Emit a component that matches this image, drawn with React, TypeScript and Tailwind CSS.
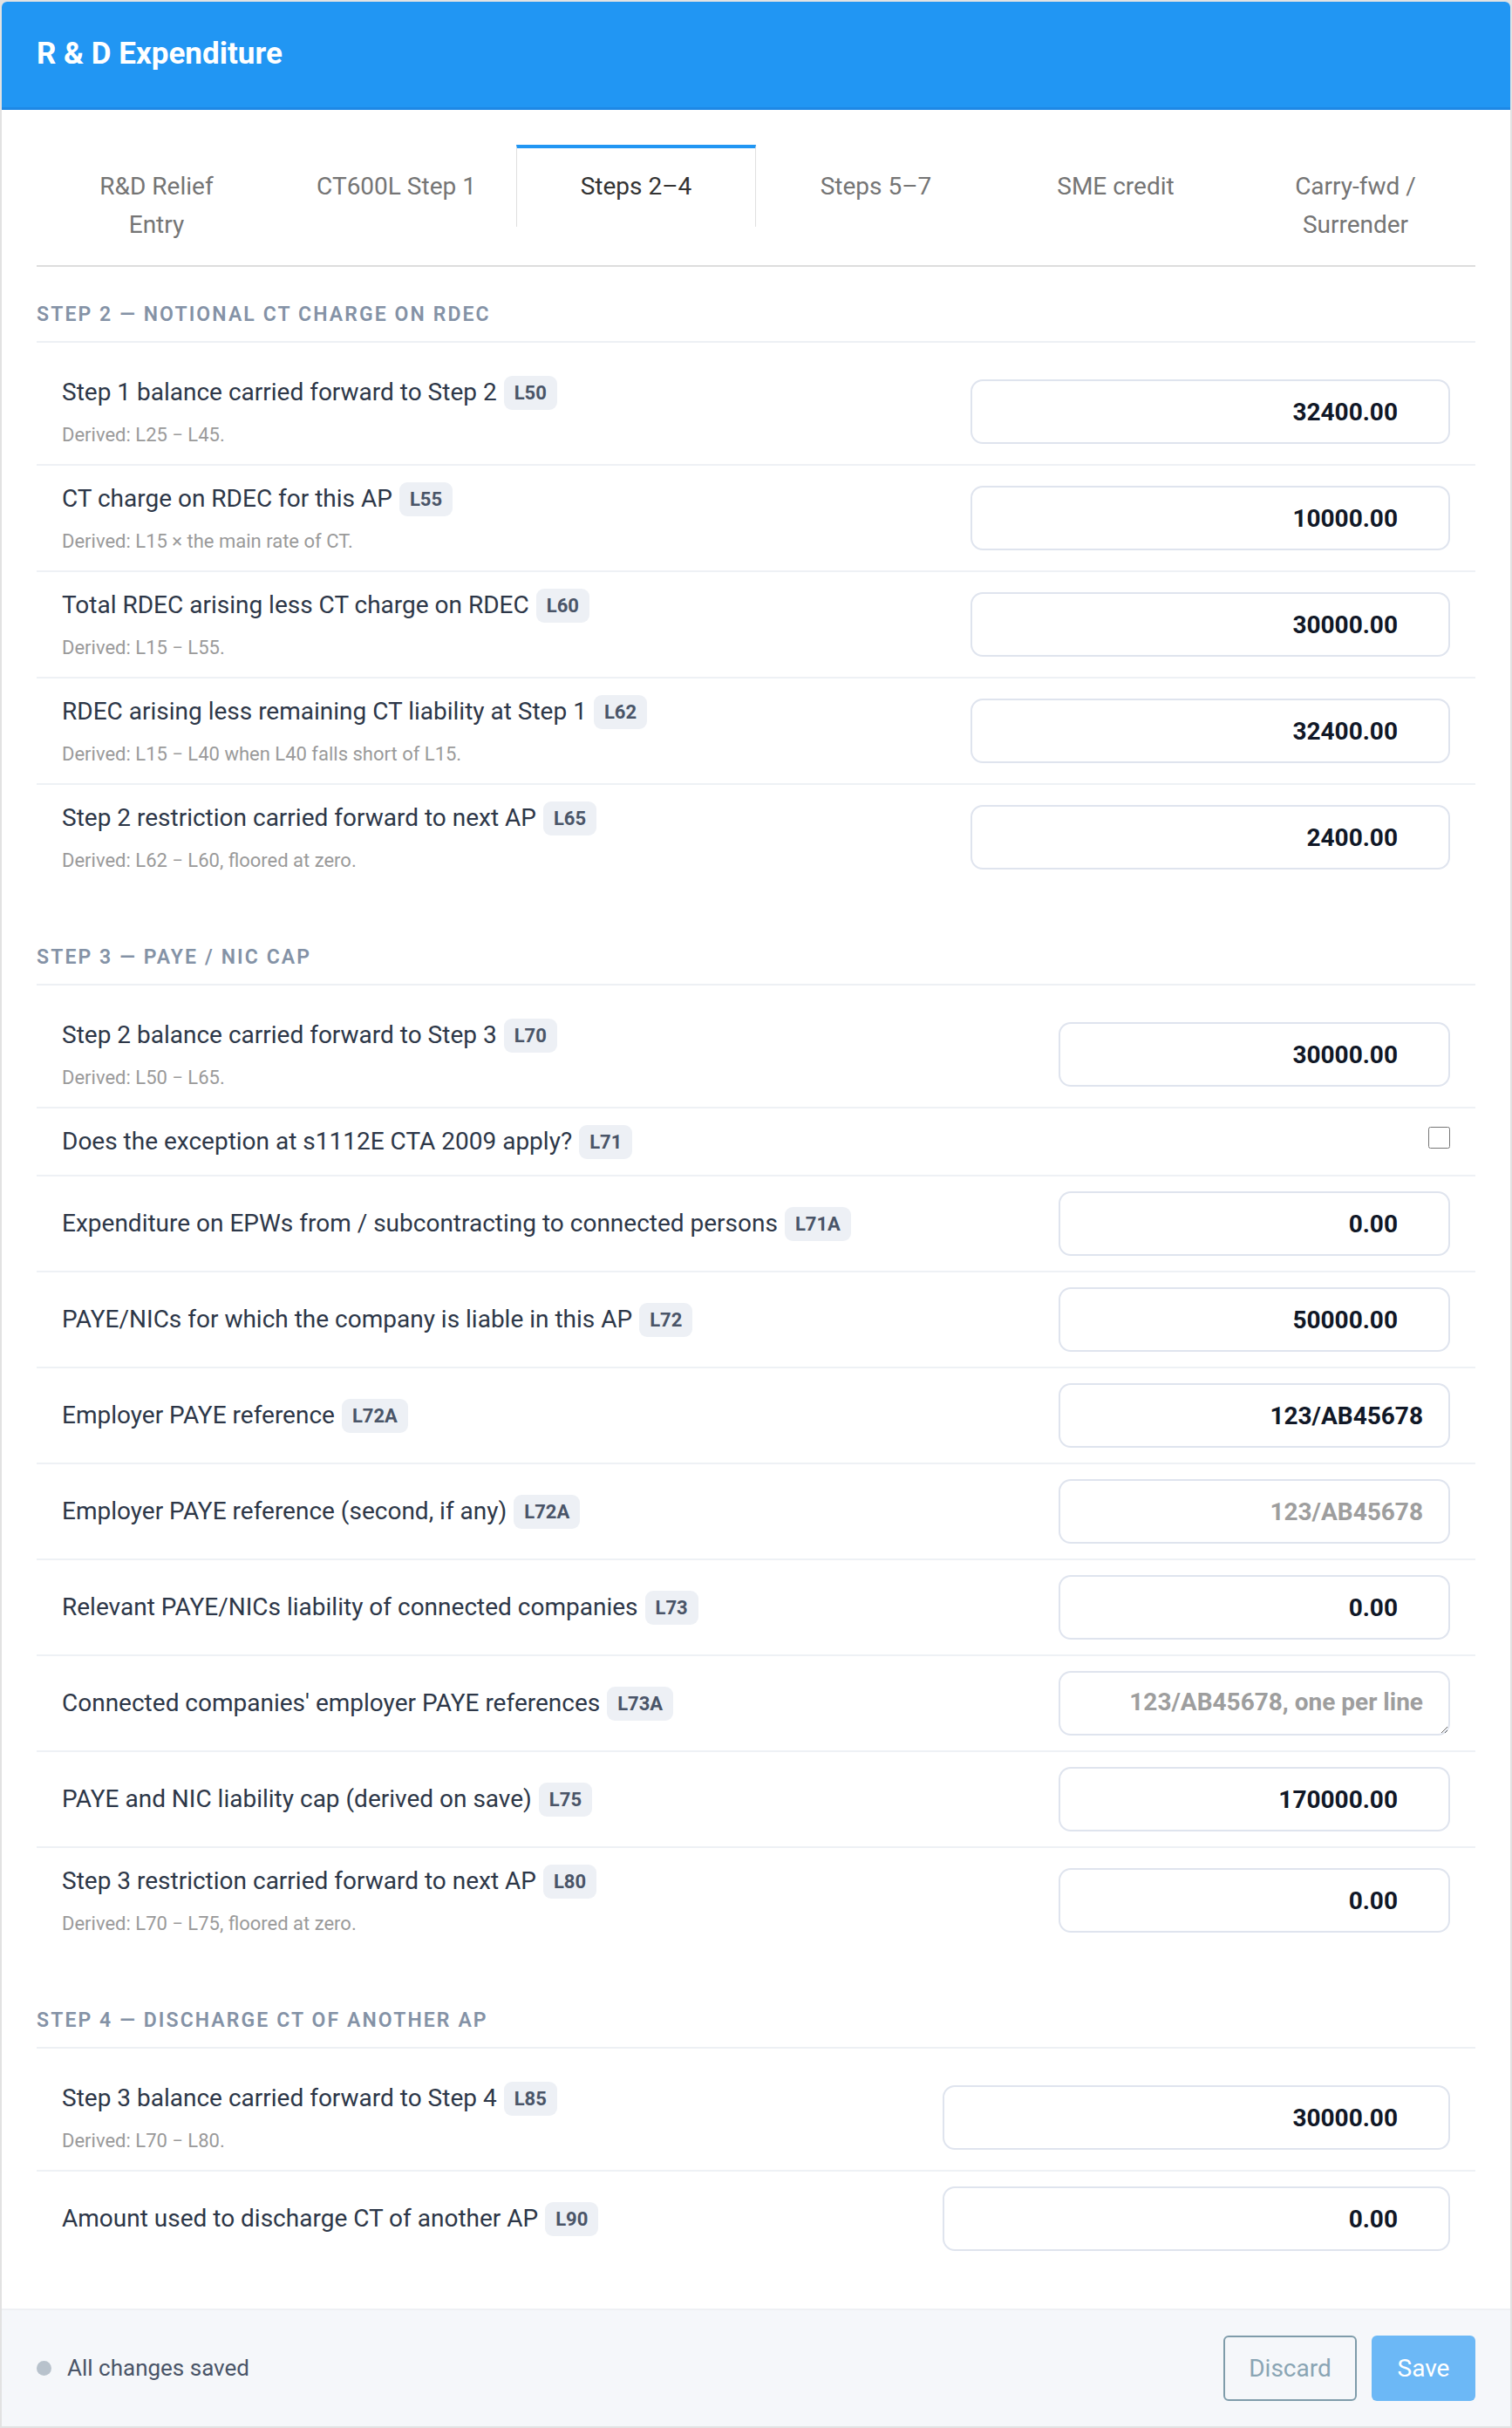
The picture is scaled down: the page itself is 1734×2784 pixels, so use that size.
import React, { useState } from 'react';

type Field = {
  label: string;
  line: string;
  derived?: string;
  value?: string;
  placeholder?: string;
  kind?: 'number' | 'text' | 'checkbox' | 'textarea';
};

type Section = {
  title: string;
  inputWidth: string;
  fields: Field[];
};

const tabs = ['R&D Relief Entry', 'CT600L Step 1', 'Steps 2–4', 'Steps 5–7', 'SME credit', 'Carry-fwd / Surrender'];

const sections: Section[] = [
  {
    title: 'Step 2 — Notional CT charge on RDEC',
    inputWidth: 'w-[550px]',
    fields: [
      { label: 'Step 1 balance carried forward to Step 2', line: 'L50', derived: 'Derived: L25 − L45.', value: '32400.00' },
      { label: 'CT charge on RDEC for this AP', line: 'L55', derived: 'Derived: L15 × the main rate of CT.', value: '10000.00' },
      { label: 'Total RDEC arising less CT charge on RDEC', line: 'L60', derived: 'Derived: L15 − L55.', value: '30000.00' },
      { label: 'RDEC arising less remaining CT liability at Step 1', line: 'L62', derived: 'Derived: L15 − L40 when L40 falls short of L15.', value: '32400.00' },
      { label: 'Step 2 restriction carried forward to next AP', line: 'L65', derived: 'Derived: L62 − L60, floored at zero.', value: '2400.00' },
    ],
  },
  {
    title: 'Step 3 — PAYE / NIC cap',
    inputWidth: 'w-[449px]',
    fields: [
      { label: 'Step 2 balance carried forward to Step 3', line: 'L70', derived: 'Derived: L50 − L65.', value: '30000.00' },
      { label: 'Does the exception at s1112E CTA 2009 apply?', line: 'L71', kind: 'checkbox' },
      { label: 'Expenditure on EPWs from / subcontracting to connected persons', line: 'L71A', value: '0.00' },
      { label: 'PAYE/NICs for which the company is liable in this AP', line: 'L72', value: '50000.00' },
      { label: 'Employer PAYE reference', line: 'L72A', value: '123/AB45678', kind: 'text' },
      { label: 'Employer PAYE reference (second, if any)', line: 'L72A', placeholder: '123/AB45678', kind: 'text' },
      { label: 'Relevant PAYE/NICs liability of connected companies', line: 'L73', value: '0.00' },
      { label: "Connected companies' employer PAYE references", line: 'L73A', placeholder: '123/AB45678, one per line', kind: 'textarea' },
      { label: 'PAYE and NIC liability cap (derived on save)', line: 'L75', value: '170000.00' },
      { label: 'Step 3 restriction carried forward to next AP', line: 'L80', derived: 'Derived: L70 − L75, floored at zero.', value: '0.00' },
    ],
  },
  {
    title: 'Step 4 — Discharge CT of another AP',
    inputWidth: 'w-[582px]',
    fields: [
      { label: 'Step 3 balance carried forward to Step 4', line: 'L85', derived: 'Derived: L70 − L80.', value: '30000.00' },
      { label: 'Amount used to discharge CT of another AP', line: 'L90', value: '0.00' },
    ],
  },
];

const FieldRow: React.FC<{ field: Field; inputWidth: string; last: boolean }> = ({ field, inputWidth, last }) => {
  const kind = field.kind ?? 'number';
  const [val, setVal] = useState(field.value ?? '');
  const base =
    'h-[74px] border-2 border-[#dfe4ee] rounded-[14px] bg-white text-right text-[28px] font-bold text-[#111827] placeholder:text-[#9e9e9e] outline-none focus:border-[#2196f3]';

  return (
    <div className={`flex items-center justify-between px-[29px] py-[17px] ${last ? '' : 'border-b-2 border-[#eef1f5]'}`}>
      <div>
        <div className="flex items-center gap-[8px] text-[28px] leading-[42px] text-[#2d3748]">
          <span>{field.label}</span>
          <span className="rounded-[9px] bg-[#edf0f5] px-[12px] text-[22px] leading-[39px] font-bold text-[#4a5568]">{field.line}</span>
        </div>
        {field.derived && <div className="mt-[12px] text-[22px] leading-[32px] text-[#9a9a9a]">{field.derived}</div>}
      </div>
      {kind === 'checkbox' && <input type="checkbox" className="m-0 mb-[10px] h-[25px] w-[25px]" />}
      {kind === 'textarea' && (
        <textarea
          className={`${base} ${inputWidth} resize-y pt-[13px] pr-[29px] leading-[42px]`}
          placeholder={field.placeholder}
        />
      )}
      {(kind === 'number' || kind === 'text') && (
        <input
          type="text"
          value={val}
          onChange={(e) => setVal(e.target.value)}
          placeholder={field.placeholder}
          className={`${base} ${inputWidth} ${kind === 'number' ? 'pr-[58px]' : 'pr-[29px]'}`}
        />
      )}
    </div>
  );
};

const App: React.FC = () => {
  const [active, setActive] = useState(2);

  return (
    <div className="min-h-screen bg-[#e2e2e2] px-[2px] pt-[2px] pb-[4px] font-['Roboto',sans-serif]">
      <div className="overflow-hidden rounded-t-[6px] bg-white">
        <div className="flex h-[124px] items-center border-b-[3px] border-[#1e88e5] bg-[#2196f3] px-[40px]">
          <h1 className="text-[35px] font-bold text-white">R &amp; D Expenditure</h1>
        </div>

        <div className="px-[40px] pt-[40px] pb-[26px]">
          <div className="grid grid-cols-6 items-start border-b-2 border-[#dddddd]">
            {tabs.map((tab, i) => (
              <button
                key={tab}
                type="button"
                onClick={() => setActive(i)}
                className={`border-t-4 px-[40px] pt-[22px] pb-[24px] text-center text-[28px] leading-[44px] ${
                  i === active
                    ? 'border-x border-x-[#e0e0e0] border-t-[#2196f3] bg-white text-[#333333]'
                    : 'border-x border-transparent text-[#757575]'
                }`}
              >
                {tab}
              </button>
            ))}
          </div>

          {sections.map((section) => (
            <div key={section.title} className="pt-[39px] pb-[23px]">
              <div className="border-b-2 border-[#edf0f4] pb-[14px] text-[23px] leading-[32px] font-semibold uppercase tracking-[2.1px] text-[#8492a6]">
                {section.title}
              </div>
              <div className="mt-[19px]">
                {section.fields.map((field, i) => (
                  <FieldRow
                    key={field.label}
                    field={field}
                    inputWidth={section.inputWidth}
                    last={i === section.fields.length - 1}
                  />
                ))}
              </div>
            </div>
          ))}
        </div>

        <div className="flex items-center justify-between border-t-2 border-[#eef0f4] bg-[#f5f7fa] px-[40px] py-[29px]">
          <div className="flex items-center gap-[18px] text-[26px] text-[#4a5568]">
            <span className="h-[17px] w-[17px] rounded-full bg-[#b8c2cc]" />
            All changes saved
          </div>
          <div className="flex gap-[17px]">
            <button type="button" className="h-[75px] w-[153px] rounded-[6px] border-2 border-[#7f9caa] text-[28px] text-[#8aa5b4]">
              Discard
            </button>
            <button type="button" className="h-[75px] w-[119px] rounded-[6px] bg-[#6cb8f6] text-[28px] text-white">
              Save
            </button>
          </div>
        </div>
      </div>
    </div>
  );
};

export default App;
